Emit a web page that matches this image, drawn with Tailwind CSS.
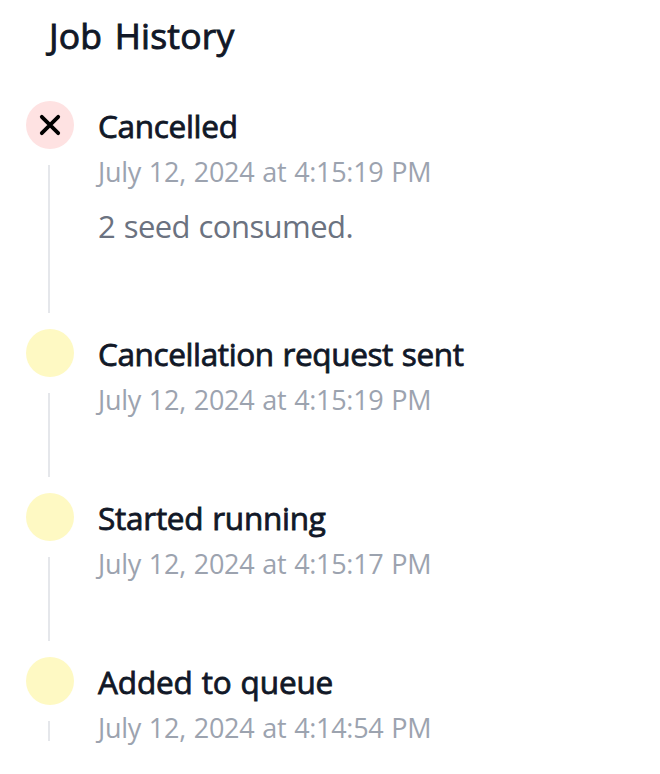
<!DOCTYPE html>
<html lang="en"><head><meta charset="utf-8"><title>Job History</title>
<script src="https://cdn.jsdelivr.net/npm/@tailwindcss/browser@4"></script></head>
<body class="bg-white font-['Open_Sans','Noto_Sans',sans-serif] text-[#111827]">
<main class="w-[660px] h-[774px] overflow-hidden pl-[26px] whitespace-nowrap">
<h1 class="pl-[23px] pt-[7px] h-[101px] text-[35.5px] leading-[56px] tracking-[0.2px] [word-spacing:3px] [-webkit-text-stroke:0.9px_#111827]">Job History</h1>
<ol>
<li class="flex h-[228px] gap-6">
<div class="flex w-12 flex-col items-center"><div class="flex size-12 shrink-0 items-center justify-center rounded-full bg-[#fee2e2]"><svg class="size-6 text-black" viewBox="0 0 24 24" fill="none" stroke="currentColor" stroke-width="3.8" stroke-linecap="round"><path d="M3.8 3.8 20.2 20.2M20.2 3.8 3.8 20.2"/></svg></div><div class="my-4 mr-[2px] w-[2px] flex-1 bg-[#e5e7eb]"></div></div>
<div><h2 class="h-[46px] text-[31.5px] leading-[50px] tracking-[-0.3px] [word-spacing:1px] [-webkit-text-stroke:0.8px_#111827]">Cancelled</h2><p class="h-[50px] text-[27px] leading-[50px] tracking-[-0.3px] [word-spacing:1.2px] text-[#9ca3af]">July 12, 2024 at 4:15:19 PM</p><p class="text-[31px] leading-[58px] tracking-[-0.55px] [word-spacing:1px] text-[#6b7280]">2 seed consumed.</p></div></li>
<li class="flex h-[164px] gap-6">
<div class="flex w-12 flex-col items-center"><div class="size-12 shrink-0 rounded-full bg-[#fef9c3]"></div><div class="my-4 mr-[2px] w-[2px] flex-1 bg-[#e5e7eb]"></div></div>
<div><h2 class="h-[46px] text-[31.5px] leading-[50px] tracking-[-0.38px] [word-spacing:1px] [-webkit-text-stroke:0.8px_#111827]">Cancellation request sent</h2><p class="text-[27px] leading-[50px] tracking-[-0.3px] [word-spacing:1.2px] text-[#9ca3af]">July 12, 2024 at 4:15:19 PM</p></div></li>
<li class="flex h-[164px] gap-6">
<div class="flex w-12 flex-col items-center"><div class="size-12 shrink-0 rounded-full bg-[#fef9c3]"></div><div class="my-4 mr-[2px] w-[2px] flex-1 bg-[#e5e7eb]"></div></div>
<div><h2 class="h-[46px] text-[31.5px] leading-[50px] tracking-[-0.25px] [word-spacing:1px] [-webkit-text-stroke:0.8px_#111827]">Started running</h2><p class="text-[27px] leading-[50px] tracking-[-0.3px] [word-spacing:1.2px] text-[#9ca3af]">July 12, 2024 at 4:15:17 PM</p></div></li>
<li class="flex h-[100px] gap-6">
<div class="flex w-12 flex-col items-center"><div class="size-12 shrink-0 rounded-full bg-[#fef9c3]"></div><div class="my-4 mr-[2px] w-[2px] flex-1 bg-[#e5e7eb]"></div></div>
<div><h2 class="h-[46px] text-[31.5px] leading-[50px] tracking-[-0.15px] [word-spacing:1px] [-webkit-text-stroke:0.8px_#111827]">Added to queue</h2><p class="text-[27px] leading-[50px] tracking-[-0.3px] [word-spacing:1.2px] text-[#9ca3af]">July 12, 2024 at 4:14:54 PM</p></div></li>
</ol></main></body></html>
